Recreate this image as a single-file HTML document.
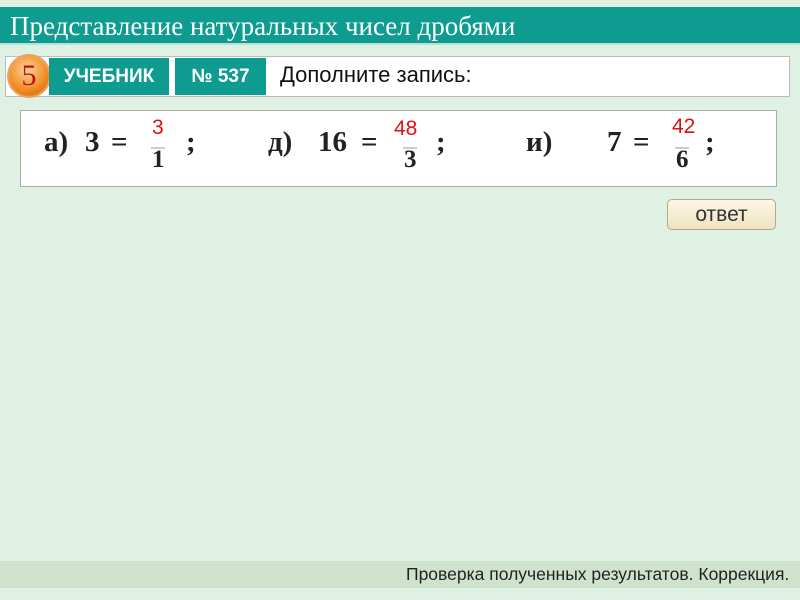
<!DOCTYPE html>
<html><head><meta charset="utf-8"><style>
body{margin:0;width:800px;height:600px;background:#dff1e3;position:relative;overflow:hidden;font-family:"Liberation Sans",sans-serif}
.a{position:absolute}
.title{left:0;top:7px;width:800px;height:38px;background:#0e9c90;border-bottom:2px solid #b9e0d8;color:#fff;font-family:"Liberation Serif",serif;font-size:27px;line-height:38px;padding-left:10px;box-sizing:border-box}
.hdr{left:5px;top:56px;width:785px;height:41px;background:#fff;border:1px solid #bbb;box-sizing:border-box}
.tb{background:#0e9c90;color:#fff;font-weight:bold;font-size:19px;line-height:37px;text-align:center;top:58px;height:37px}
.m{position:absolute;top:126px;font-family:"Liberation Serif",serif;font-weight:bold;font-size:29px;color:#222}
.d{position:absolute;top:146px;font-family:"Liberation Serif",serif;font-weight:bold;font-size:25px;color:#222}
.r{position:absolute;color:#e01010;font-family:"Liberation Sans",sans-serif;font-size:21px}
.ln{position:absolute;top:147px;width:14px;height:2px;background:#ccc}
</style></head><body>
<div class="a title">Представление натуральных чисел дробями</div>
<div class="a hdr"></div>
<div class="a" style="left:9px;top:56px;width:40px;height:40px;border-radius:50%;background:radial-gradient(circle at 45% 35%,#fbd49a,#f08a20 60%,#c95c08);box-shadow:0 0 0 2px #e9a060"></div>
<div class="a" style="left:9px;top:56px;width:40px;height:40px;line-height:40px;text-align:center;color:#c01010;font-size:30px;font-family:'Liberation Serif',serif">5</div>
<div class="a tb" style="left:49px;width:120px">УЧЕБНИК</div>
<div class="a tb" style="left:175px;width:91px">№ 537</div>
<div class="a" style="left:280px;top:62px;font-size:22px;color:#111">Дополните запись:</div>
<div class="a" style="left:20px;top:110px;width:757px;height:77px;background:#fff;border:1px solid #aaa;box-sizing:border-box"></div>

<div class="m" style="left:44px">а)</div>
<div class="m" style="left:85px">3</div>
<div class="m" style="left:111px">=</div>
<div class="r" style="left:152px;top:116px">3</div>
<div class="ln" style="left:151px"></div>
<div class="d" style="left:152px">1</div>
<div class="m" style="left:186px">;</div>

<div class="m" style="left:268px">д)</div>
<div class="m" style="left:318px">16</div>
<div class="m" style="left:361px">=</div>
<div class="r" style="left:394px;top:117px">48</div>
<div class="ln" style="left:403px"></div>
<div class="d" style="left:404px">3</div>
<div class="m" style="left:436px">;</div>

<div class="m" style="left:526px">и)</div>
<div class="m" style="left:607px">7</div>
<div class="m" style="left:633px">=</div>
<div class="r" style="left:672px;top:115px">42</div>
<div class="ln" style="left:675px"></div>
<div class="d" style="left:676px">6</div>
<div class="m" style="left:705px">;</div>

<div class="a" style="left:667px;top:199px;width:109px;height:31px;border:1px solid #b8a888;border-radius:5px;background:linear-gradient(#fcf7e6,#efe3c2);box-sizing:border-box;text-align:center;line-height:29px;font-size:21px;color:#333">ответ</div>
<div class="a" style="left:0;top:561px;width:800px;height:27px;background:#cfe3cc"></div>
<div class="a" style="left:406px;top:564px;font-size:17.5px;color:#222">Проверка полученных результатов. Коррекция.</div>
</body></html>
